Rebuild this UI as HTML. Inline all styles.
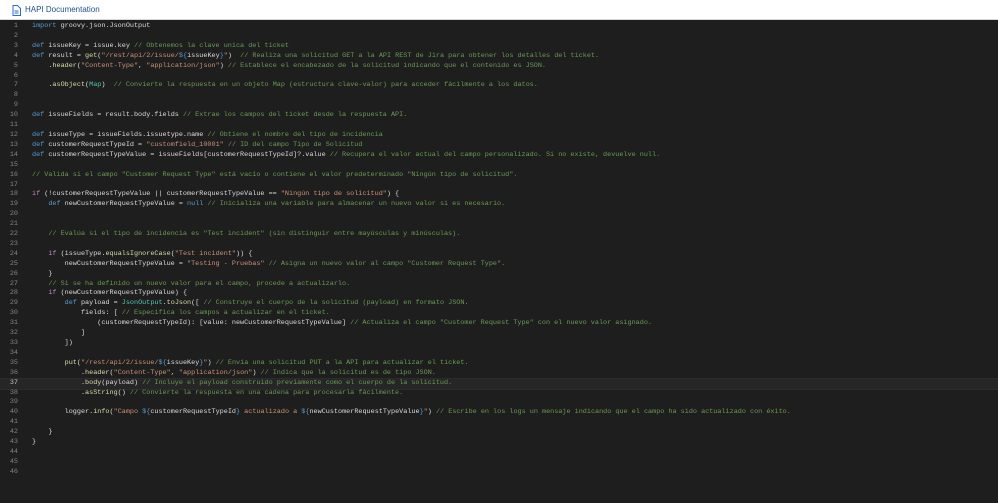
<!DOCTYPE html>
<html><head><meta charset="utf-8"><style>
*{margin:0;padding:0;box-sizing:border-box}
body{width:998px;height:503px;overflow:hidden;background:#1e1e1e;font-family:"Liberation Mono",monospace}
.tab{position:absolute;left:0;top:0;width:998px;height:20px;background:#fff;border-bottom:1px solid #d8d8d8}
.tab span{position:absolute;left:25px;top:5px;font:8px "Liberation Sans",sans-serif;color:#1f4e8c}
.ed{position:absolute;left:0;top:20px;width:998px;height:483px;background:#1e1e1e;padding-top:2px}
.l{height:9.92px;line-height:9.92px;font-size:6.8px;white-space:pre;position:relative;color:#dcdcdc}
.n{position:absolute;left:0;width:18px;text-align:right;color:#858585}
.x{position:absolute;left:32px}
.k{color:#569cd6}.p{color:#c586c0}.c{color:#6a9955}.s{color:#ce9178}.f{color:#dcdcaa}.v{color:#9cdcfe}.t{color:#4ec9b0}
.cur{background:#262626;outline:1px solid #2c2c2c}
</style></head><body>
<div class="tab">
<svg style="position:absolute;left:12px;top:5px" width="9" height="11" viewBox="0 0 9 11"><path d="M1 .5h4.5L8.5 3.5V10.5H1Z" fill="none" stroke="#2a6bd1" stroke-width="1"/><path d="M2.5 6h4M2.5 8h4" stroke="#2a6bd1"/></svg>
<span>HAPI Documentation</span></div>
<div class="ed">
<div class="l"><span class="n">1</span><span class="x"><span class="k">import</span> groovy.json.JsonOutput</span></div>
<div class="l"><span class="n">2</span></div>
<div class="l"><span class="n">3</span><span class="x"><span class="k">def</span> issueKey = issue.key <span class="c">// Obtenemos la clave unica del ticket</span></span></div>
<div class="l"><span class="n">4</span><span class="x"><span class="k">def</span> result = <span class="f">get</span>(<span class="s">"/rest/api/2/issue/</span><span class="k">${</span>issueKey<span class="k">}</span><span class="s">"</span>)  <span class="c">// Realiza una solicitud GET a la API REST de Jira para obtener los detalles del ticket.</span></span></div>
<div class="l"><span class="n">5</span><span class="x">    .<span class="f">header</span>(<span class="s">"Content-Type"</span>, <span class="s">"application/json"</span>) <span class="c">// Establece el encabezado de la solicitud indicando que el contenido es JSON.</span></span></div>
<div class="l"><span class="n">6</span></div>
<div class="l"><span class="n">7</span><span class="x">    .<span class="f">asObject</span>(<span class="t">Map</span>)  <span class="c">// Convierte la respuesta en un objeto Map (estructura clave-valor) para acceder fácilmente a los datos.</span></span></div>
<div class="l"><span class="n">8</span></div>
<div class="l"><span class="n">9</span></div>
<div class="l"><span class="n">10</span><span class="x"><span class="k">def</span> issueFields = result.body.fields <span class="c">// Extrae los campos del ticket desde la respuesta API.</span></span></div>
<div class="l"><span class="n">11</span></div>
<div class="l"><span class="n">12</span><span class="x"><span class="k">def</span> issueType = issueFields.issuetype.name <span class="c">// Obtiene el nombre del tipo de incidencia</span></span></div>
<div class="l"><span class="n">13</span><span class="x"><span class="k">def</span> customerRequestTypeId = <span class="s">"customfield_10001"</span> <span class="c">// ID del campo Tipo de Solicitud</span></span></div>
<div class="l"><span class="n">14</span><span class="x"><span class="k">def</span> customerRequestTypeValue = issueFields[customerRequestTypeId]?.value <span class="c">// Recupera el valor actual del campo personalizado. Si no existe, devuelve null.</span></span></div>
<div class="l"><span class="n">15</span></div>
<div class="l"><span class="n">16</span><span class="x"><span class="c">// Valida si el campo "Customer Request Type" está vacío o contiene el valor predeterminado "Ningún tipo de solicitud".</span></span></div>
<div class="l"><span class="n">17</span></div>
<div class="l"><span class="n">18</span><span class="x"><span class="p">if</span> (!customerRequestTypeValue || customerRequestTypeValue == <span class="s">"Ningún tipo de solicitud"</span>) {</span></div>
<div class="l"><span class="n">19</span><span class="x">    <span class="k">def</span> newCustomerRequestTypeValue = <span class="k">null</span> <span class="c">// Inicializa una variable para almacenar un nuevo valor si es necesario.</span></span></div>
<div class="l"><span class="n">20</span></div>
<div class="l"><span class="n">21</span></div>
<div class="l"><span class="n">22</span><span class="x">    <span class="c">// Evalúa si el tipo de incidencia es "Test incident" (sin distinguir entre mayúsculas y minúsculas).</span></span></div>
<div class="l"><span class="n">23</span></div>
<div class="l"><span class="n">24</span><span class="x">    <span class="p">if</span> (issueType.<span class="f">equalsIgnoreCase</span>(<span class="s">"Test incident"</span>)) {</span></div>
<div class="l"><span class="n">25</span><span class="x">        newCustomerRequestTypeValue = <span class="s">"Testing - Pruebas"</span> <span class="c">// Asigna un nuevo valor al campo "Customer Request Type".</span></span></div>
<div class="l"><span class="n">26</span><span class="x">    }</span></div>
<div class="l"><span class="n">27</span><span class="x">    <span class="c">// Si se ha definido un nuevo valor para el campo, procede a actualizarlo.</span></span></div>
<div class="l"><span class="n">28</span><span class="x">    <span class="p">if</span> (newCustomerRequestTypeValue) {</span></div>
<div class="l"><span class="n">29</span><span class="x">        <span class="k">def</span> payload = <span class="t">JsonOutput</span>.<span class="f">toJson</span>([ <span class="c">// Construye el cuerpo de la solicitud (payload) en formato JSON.</span></span></div>
<div class="l"><span class="n">30</span><span class="x">            fields: [ <span class="c">// Especifica los campos a actualizar en el ticket.</span></span></div>
<div class="l"><span class="n">31</span><span class="x">                (customerRequestTypeId): [value: newCustomerRequestTypeValue] <span class="c">// Actualiza el campo "Customer Request Type" con el nuevo valor asignado.</span></span></div>
<div class="l"><span class="n">32</span><span class="x">            ]</span></div>
<div class="l"><span class="n">33</span><span class="x">        ])</span></div>
<div class="l"><span class="n">34</span></div>
<div class="l"><span class="n">35</span><span class="x">        <span class="f">put</span>(<span class="s">"/rest/api/2/issue/</span><span class="k">${</span>issueKey<span class="k">}</span><span class="s">"</span>) <span class="c">// Envía una solicitud PUT a la API para actualizar el ticket.</span></span></div>
<div class="l"><span class="n">36</span><span class="x">            .<span class="f">header</span>(<span class="s">"Content-Type"</span>, <span class="s">"application/json"</span>) <span class="c">// Indica que la solicitud es de tipo JSON.</span></span></div>
<div class="l cur"><span class="n" style="color:#c6c6c6">37</span><span class="x">            .<span class="f">body</span>(payload) <span class="c">// Incluye el payload construido previamente como el cuerpo de la solicitud.</span></span></div>
<div class="l"><span class="n">38</span><span class="x">            .<span class="f">asString</span>() <span class="c">// Convierte la respuesta en una cadena para procesarla fácilmente.</span></span></div>
<div class="l"><span class="n">39</span></div>
<div class="l"><span class="n">40</span><span class="x">        logger.<span class="f">info</span>(<span class="s">"Campo </span><span class="k">${</span>customerRequestTypeId<span class="k">}</span><span class="s"> actualizado a </span><span class="k">${</span>newCustomerRequestTypeValue<span class="k">}</span><span class="s">"</span>) <span class="c">// Escribe en los logs un mensaje indicando que el campo ha sido actualizado con éxito.</span></span></div>
<div class="l"><span class="n">41</span></div>
<div class="l"><span class="n">42</span><span class="x">    }</span></div>
<div class="l"><span class="n">43</span><span class="x">}</span></div>
<div class="l"><span class="n">44</span></div>
<div class="l"><span class="n">45</span></div>
<div class="l"><span class="n">46</span></div>
</div>
</body></html>
